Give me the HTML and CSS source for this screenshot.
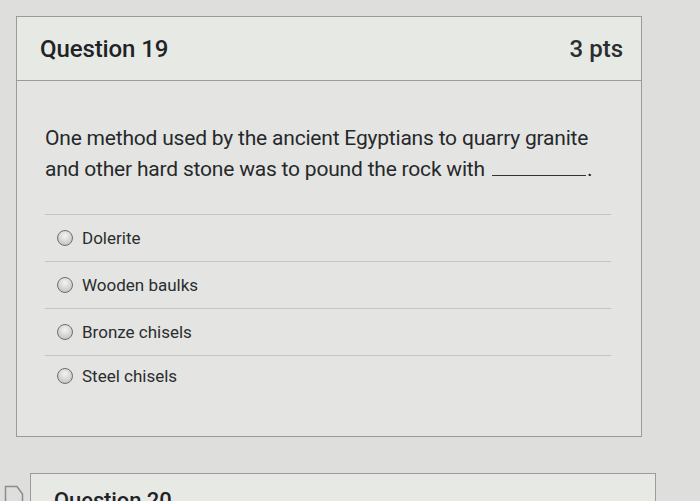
FILE: index.html
```html
<!DOCTYPE html>
<html lang="en">
<head>
  <meta charset="UTF-8">
  <title>Quiz</title>
  <link rel="stylesheet" href="styles.css">
</head>
<body>
  <div class="quiz">
    <div class="question">
      <div class="question-header">
        <span class="question-title">Question 19</span>
        <span class="question-pts">3 pts</span>
      </div>
      <div class="question-body">
        <p class="question-text">One method used by the ancient Egyptians to quarry granite and other hard stone was to pound the rock with <span class="blank"></span>.</p>
        <ul class="answers">
          <li class="answer"><span class="radio"></span>Dolerite</li>
          <li class="answer"><span class="radio"></span>Wooden baulks</li>
          <li class="answer"><span class="radio"></span>Bronze chisels</li>
          <li class="answer"><span class="radio"></span>Steel chisels</li>
        </ul>
      </div>
    </div>

    <div class="question next">
      <svg class="flag" width="20" height="22" viewBox="0 0 20 22">
        <path d="M1.5 22 V1.5 H13 L18.5 9 V22" fill="none" stroke="#8b8d8a" stroke-width="1.5"/>
      </svg>
      <div class="question-header">
        <span class="question-title">Question 20</span>
      </div>
    </div>
  </div>
</body>
</html>
```

FILE: styles.css
```css
body {
  margin: 0;
  background: #dedfdc;
  font-family: Roboto, 'Liberation Sans', sans-serif;
  color: #1f2326;
  height: 501px;
  overflow: hidden;
}
.quiz {
  padding: 16px 0 0 16px;
}
.question {
  width: 624px;
  border: 1px solid #9a9c99;
  background: #e4e5e2;
}
.question-header {
  display: flex;
  justify-content: space-between;
  align-items: center;
  height: 63px;
  padding: 0 18px 0 23px;
  background: #e7e9e5;
  border-bottom: 1px solid #9a9c99;
}
.question-title {
  font-size: 24px;
  font-weight: 500;
  letter-spacing: -0.1px;
}
.question-pts {
  font-size: 24px;
  font-weight: 500;
  color: #2b2e30;
}
.question-body {
  padding: 42px 30px 40px 28px;
}
.question-text {
  margin: 0;
  max-width: 570px;
  font-size: 21px;
  line-height: 31px;
  letter-spacing: -0.2px;
  color: #26292b;
}
.blank {
  display: inline-block;
  width: 94px;
  border-bottom: 1px solid #333;
  margin: 0 1px 0 2px;
}
.answers {
  list-style: none;
  margin: 29px 0 0;
  padding: 0;
}
.answer {
  display: flex;
  align-items: center;
  gap: 9px;
  height: 46px;
  padding-left: 12px;
  border-top: 1px solid #c4c5c2;
  font-size: 17px;
  color: #2a2d2f;
}
.answer:last-child {
  height: 40px;
}
.radio {
  width: 14px;
  height: 14px;
  border-radius: 50%;
  border: 1.5px solid #6e706e;
  background: radial-gradient(circle at 50% 35%, #f4f4f3, #b9bab8);
}
.next {
  position: relative;
  margin: 36px 0 0 14px;
}
.next .question-header {
  height: 40px;
  align-items: flex-start;
  padding-top: 14px;
  border-bottom: none;
}
.next .question-title {
  font-size: 22px;
}
.flag {
  position: absolute;
  left: -27px;
  top: 11px;
}
```
